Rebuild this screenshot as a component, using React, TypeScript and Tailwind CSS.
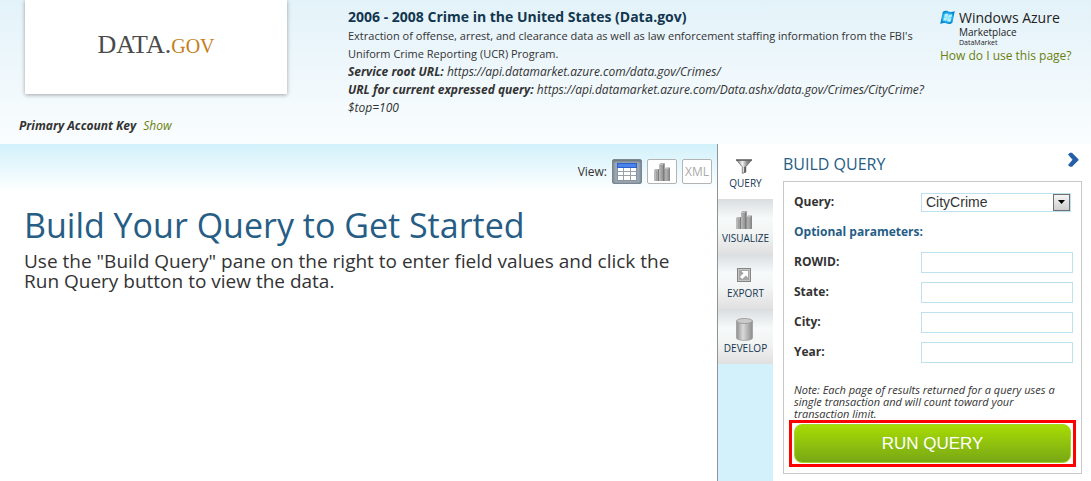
import React, { useState } from "react";

type IconProps = { className?: string };

function FunnelIcon({ className }: IconProps) {
  return (
    <svg viewBox="0 0 16 15" className={className} aria-hidden="true">
      <defs>
        <linearGradient id="funnel" x1="0" x2="1" y1="0" y2="0">
          <stop offset="0" stopColor="#808080" />
          <stop offset="0.4" stopColor="#f0f0f0" />
          <stop offset="0.7" stopColor="#8a8a8a" />
          <stop offset="1" stopColor="#6a6a6a" />
        </linearGradient>
      </defs>
      <path d="M0.5 1.2L6.3 7.8V14.4L9.8 13V7.8L15.5 1.2Z" fill="url(#funnel)" stroke="#6c6c6c" strokeWidth="0.8" />
      <path d="M0 1H16" stroke="#5c5c5c" strokeWidth="1.4" />
      <path d="M9 7.8V13.4" stroke="#555" strokeWidth="1.6" />
    </svg>
  );
}

function BarsIcon({ className }: IconProps) {
  return (
    <svg viewBox="0 0 16 18" className={className} aria-hidden="true">
      <path d="M0.3 7L1.5 6H5V18H0.3Z" fill="#a2a2a2" />
      <path d="M4 7L5 6V18H4Z" fill="#7d7d7d" />
      <path d="M10.5 5.5L12 4.5H15.8V18H10.5Z" fill="#a2a2a2" />
      <path d="M14.6 5.5L15.8 4.5V18H14.6Z" fill="#7d7d7d" />
      <path d="M5.3 1.2L6.5 0.2H10.5V18H5.3Z" fill="#9a9a9a" />
      <path d="M9.2 1.2L10.5 0.2V18H9.2Z" fill="#757575" />
      <path d="M0.3 7H4M5.3 1.5H9.2M10.5 5.7H14.6" stroke="#cfcfcf" strokeWidth="0.8" />
      <path d="M1.5 8V18M6.8 2.5V18M12 6.8V18" stroke="#b8b8b8" strokeWidth="0.9" />
    </svg>
  );
}

function ExportIcon({ className }: IconProps) {
  return (
    <svg viewBox="0 0 14 14" className={className} aria-hidden="true">
      <rect x="0.5" y="0.5" width="13" height="13" fill="#c4c4c4" stroke="#858585" />
      <rect x="2" y="2" width="10" height="10" fill="#a6a6a6" />
      <path d="M4.5 3H11V9.5L8.8 7.4L5.2 11L3 8.8L6.6 5.2Z" fill="#fff" />
    </svg>
  );
}

function CylinderIcon({ className }: IconProps) {
  return (
    <svg viewBox="0 0 17 23" className={className} aria-hidden="true">
      <defs>
        <linearGradient id="cylinder" x1="0" x2="1" y1="0" y2="0">
          <stop offset="0" stopColor="#8f8f8f" />
          <stop offset="0.4" stopColor="#dadada" />
          <stop offset="1" stopColor="#8c8c8c" />
        </linearGradient>
      </defs>
      <path d="M0.5 3V20C0.5 23.3 16.5 23.3 16.5 20V3Z" fill="url(#cylinder)" stroke="#909090" strokeWidth="0.6" />
      <ellipse cx="8.5" cy="3" rx="8" ry="2.5" fill="#cbcbcb" stroke="#939393" strokeWidth="0.8" />
    </svg>
  );
}

function TableIcon({ className }: IconProps) {
  return (
    <svg viewBox="0 0 20 18" className={className} aria-hidden="true">
      <rect x="0.5" y="0.5" width="19" height="17" fill="#fff" stroke="#8794a0" />
      <rect x="0.5" y="0.5" width="19" height="4" fill="#4c83ea" stroke="#2c5fd0" />
      <path d="M1 8.5H19M1 12.5H19M6.5 5V17M13.5 5V17" stroke="#98a2aa" strokeWidth="1" />
    </svg>
  );
}

function WindowsFlag({ className }: IconProps) {
  return (
    <svg viewBox="0 0 15 15" className={className} aria-hidden="true">
      <defs>
        <radialGradient id="flag">
          <stop offset="0" stopColor="#9cecff" />
          <stop offset="0.6" stopColor="#25b7ee" />
          <stop offset="1" stopColor="#0783cf" />
        </radialGradient>
      </defs>
      <path d="M2.8 1.8C5.5 -0.1 7.5 1.2 9.2 1.7C11 2.2 13 1.8 14.8 1L12.4 12.8C9.8 14.9 7.8 13.8 6 13.2C4 12.6 2.2 13 0.2 13.9Z" fill="url(#flag)" />
      <path d="M4.8 4.2C6 3.4 7 3.7 8 4.1L7.3 7C6.3 6.5 5.2 6.5 4.1 7ZM8.8 4.4C10 4.8 11 4.7 12.2 4.2L11.5 7.2C10.2 7.8 9.2 7.6 8.1 7.3ZM3.9 7.8C5 7.3 6.2 7.3 7.1 7.8L6.4 11C5.4 10.4 4.3 10.4 3.1 11ZM7.9 8.1C9 8.5 10.2 8.5 11.3 8.1L10.5 11.4C9.5 12 8.2 11.7 7.1 11.3Z" fill="#b8efff" />
    </svg>
  );
}

const tabs = [
  { label: "QUERY", icon: <FunnelIcon className="h-[15px] w-4" /> },
  { label: "VISUALIZE", icon: <BarsIcon className="h-[18px] w-4" /> },
  { label: "EXPORT", icon: <ExportIcon className="size-[14px]" /> },
  { label: "DEVELOP", icon: <CylinderIcon className="h-[23px] w-[17px]" /> },
];

const parameters = ["ROWID", "State", "City", "Year"];

function Header() {
  return (
    <header className="flex h-36 bg-linear-to-b from-[#e3f2f9] to-[#fafdfe]">
      <div className="w-[348px] shrink-0">
        <div className="ml-[25px] flex h-[94px] w-[262px] items-center justify-center bg-white pb-1 shadow-[0_1px_4px_rgba(0,0,0,0.35)]">
          <div className="font-['Liberation_Serif',serif] text-[26px] leading-8 text-[#4a4a4a]">
            DATA.<span className="text-xl text-[#c47e1c]">GOV</span>
          </div>
        </div>
        <p className="mt-[23px] ml-[19px] text-xs leading-[18px] italic">
          <strong>Primary Account Key</strong>
          <a href="#key" className="ml-[7px] text-[#6b7f0e]">Show</a>
        </p>
      </div>
      <div className="min-w-0 flex-1 pt-[7px] text-xs leading-[18px]">
        <h2 className="text-sm leading-5 font-bold text-[#12364f]">2006 - 2008 Crime in the United States (Data.gov)</h2>
        <p className="text-[11px]">
          Extraction of offense, arrest, and clearance data as well as law enforcement staffing information from the FBI's
          Uniform Crime Reporting (UCR) Program.
        </p>
        <p className="italic"><strong>Service root URL:</strong> https://api.datamarket.azure.com/data.gov/Crimes/</p>
        <p className="italic">
          <strong>URL for current expressed query:</strong> https://api.datamarket.azure.com/Data.ashx/data.gov/Crimes/CityCrime?<wbr />$top=100
        </p>
      </div>
      <div className="w-[151px] shrink-0 pt-[10px]">
        <div className="flex gap-1 text-[#222]">
          <WindowsFlag className="size-[15px]" />
          <div>
            <div className="text-sm leading-4 whitespace-nowrap">Windows Azure</div>
            <div className="text-[10px] leading-3">Marketplace</div>
            <div className="text-[7px] leading-[9px]">DataMarket</div>
          </div>
        </div>
        <a href="#help" className="block text-xs leading-[18px] whitespace-nowrap text-[#6b7f0e]">How do I use this page?</a>
      </div>
    </header>
  );
}

function ViewButton({ label, active, children }: { label: string; active?: boolean; children: React.ReactNode }) {
  return (
    <button
      type="button"
      aria-label={label}
      className={
        active
          ? "flex h-[25px] w-[30px] items-center justify-center rounded-xs border border-[#7b8790] bg-[#9aa8b3] shadow-[inset_0_1px_3px_rgba(0,0,0,0.4)]"
          : "flex h-[25px] w-[30px] items-center justify-center rounded-xs border border-[#b4b4b4] bg-white"
      }
    >
      {children}
    </button>
  );
}

function QueryPane() {
  const [query, setQuery] = useState("CityCrime");
  return (
    <section className="w-[318px] shrink-0 bg-white pr-[9px] pb-[7px] pl-[10px]">
      <div className="flex h-[37px] items-start justify-between pt-2 pr-[3px]">
        <h2 className="text-base leading-6 text-[#265d85]">BUILD QUERY</h2>
        <button type="button" aria-label="Collapse pane">
          <svg viewBox="0 0 12 16" className="h-4 w-3" aria-hidden="true">
            <path d="M1 2.5L3 0.7L5 0.7L11.5 7.2V8.3L5 14.8H3L1 13L5.5 7.8Z" fill="#2460a8" />
          </svg>
        </button>
      </div>
      <form className="border border-[#c8c8c8] px-[5px] pt-[5px] pb-[6px]" onSubmit={(e) => e.preventDefault()}>
        <div className="pr-[3px] pl-[5px] text-xs font-bold">
          <div className="flex h-[30px] items-center">
            <label htmlFor="query" className="w-[127px]">Query:</label>
            <div className="relative w-[150px]">
              <select
                id="query"
                value={query}
                onChange={(e) => setQuery(e.target.value)}
                className="block h-[19px] w-full appearance-none border border-[#bfe0ee] bg-white pl-1 font-['Liberation_Sans',sans-serif] text-sm leading-4 font-normal"
              >
                <option>CityCrime</option>
              </select>
              <span className="pointer-events-none absolute top-px right-px flex h-[17px] w-[17px] items-center justify-center border border-[#6f6f6f] bg-linear-to-b from-[#f4f4f4] to-[#cfcfcf]">
                <svg viewBox="0 0 7 4" className="h-1 w-[7px]" aria-hidden="true">
                  <path d="M0 0H7L3.5 4Z" fill="#000" />
                </svg>
              </span>
            </div>
          </div>
          <div className="flex h-[30px] items-center text-[#265d85]">Optional parameters:</div>
          {parameters.map((name) => (
            <div key={name} className="flex h-[30px] items-center">
              <label htmlFor={name} className="w-[127px]">{name}:</label>
              <input id={name} type="text" className="h-[21px] min-w-0 flex-1 border border-[#bfe0ee] bg-white px-1 font-normal" />
            </div>
          ))}
        </div>
        <p className="mt-[17px] pr-3 pl-[5px] text-[11px] leading-3 italic">
          Note: Each page of results returned for a query uses a single transaction and will count toward your transaction limit.
        </p>
        <div className="border-3 border-[#f00] px-[2px] py-px">
          <button
            type="submit"
            className="h-[39px] w-full rounded-lg border border-[#9fd82a] bg-linear-to-b from-[#a8dc00] to-[#78a814] font-['Liberation_Sans',sans-serif] text-[17px] text-white"
          >
            RUN QUERY
          </button>
        </div>
      </form>
    </section>
  );
}

export default function App() {
  return (
    <div className="flex min-h-screen flex-col bg-white font-['Open_Sans','Noto_Sans',sans-serif] text-[#333]">
      <Header />
      <div className="flex flex-1">
        <main className="min-w-0 flex-1 bg-[linear-gradient(to_bottom,#d2f1fb,#ffffff_48px)] pt-[15px]">
          <div className="flex items-center justify-end gap-[5px] pr-[5px] text-xs">
            <span>View:</span>
            <ViewButton label="Table" active><TableIcon className="h-[18px] w-5" /></ViewButton>
            <ViewButton label="Chart"><BarsIcon className="h-[18px] w-4" /></ViewButton>
            <ViewButton label="XML"><span className="text-xs text-[#aaa]">XML</span></ViewButton>
          </div>
          <div className="pt-[15px] pr-4 pl-6">
            <h1 className="text-[34px] leading-[52px] whitespace-nowrap text-[#265d85]">Build Your Query to Get Started</h1>
            <p className="text-[19px] leading-5">
              Use the "Build Query" pane on the right to enter field values and click the Run Query button to view the data.
            </p>
          </div>
        </main>
        <nav className="w-14 shrink-0 border-l border-[#8f9496] bg-[#d2f1fb]">
          {tabs.map((tab, i) => (
            <button
              key={tab.label}
              type="button"
              className={
                i === 0
                  ? "flex h-[55px] w-full flex-col items-center bg-white pt-3 text-[#12364f]"
                  : "flex h-[55px] w-full flex-col items-center bg-[linear-gradient(to_bottom,#d9dddf,#f6fafb_35%,#f3f4f4_60%,#e0e0e0)] pt-2 text-[#12364f]"
              }
            >
              <span className={i === 0 ? "flex h-[21px] items-center justify-center pr-[3px]" : "flex h-[25px] items-center justify-center pr-[3px]"}>
                {tab.icon}
              </span>
              <span className="text-[10px] leading-3">{tab.label}</span>
            </button>
          ))}
        </nav>
        <QueryPane />
      </div>
    </div>
  );
}
